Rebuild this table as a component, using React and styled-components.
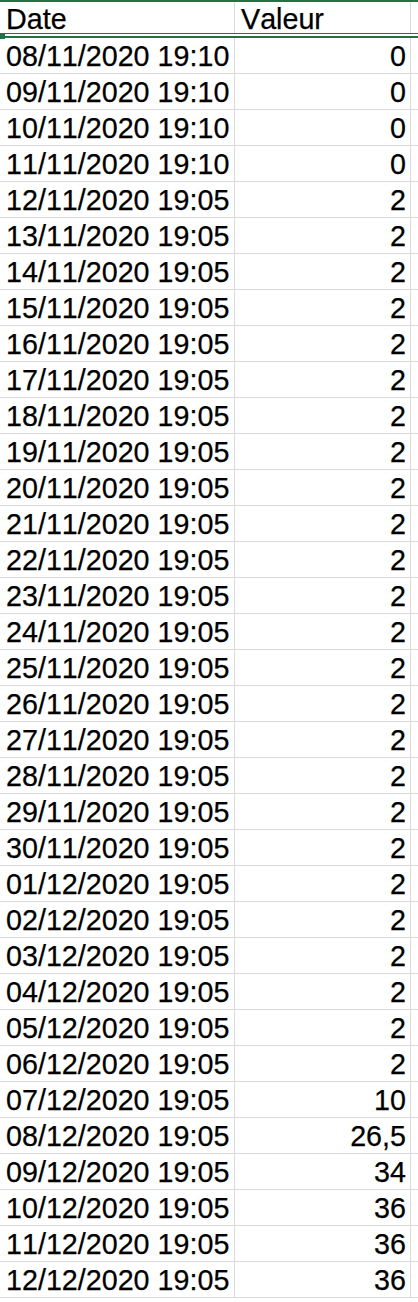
import React from "react";
import styled, { createGlobalStyle } from "styled-components";

const GREEN = "#217346";
const GRID = "#dadada";

const Global = createGlobalStyle`
  html, body { margin: 0; padding: 0; background: #ffffff; }
  body {
    font-family: "Liberation Sans", Arial, sans-serif;
    color: #000;
    font-kerning: none;
    font-feature-settings: "kern" 0;
  }
`;

const Sheet = styled.div`
  position: relative;
  width: 418px;
  border-top: 2px solid ${GREEN};
  overflow: hidden;
`;

const Row = styled.div`
  display: flex;
  height: ${(p) => (p.$header ? "31px" : "35px")};
  border-bottom: ${(p) => (p.$header ? "none" : `1px solid ${GRID}`)};
`;

const Cell = styled.div`
  box-sizing: border-box;
  flex: ${(p) => (p.$w ? `0 0 ${p.$w}px` : "1 1 auto")};
  border-right: ${(p) => (p.$w ? `1px solid ${GRID}` : "none")};
  font-size: 28.7px;
  line-height: ${(p) => (p.$header ? "29px" : "36px")};
  white-space: nowrap;
  -webkit-text-stroke: 0.25px #000;
  text-align: ${(p) => (p.$right ? "right" : "left")};
  padding-top: ${(p) => (p.$header ? "3px" : "0")};
  padding-left: ${(p) => (p.$right ? "0" : "6px")};
  padding-right: ${(p) => (p.$right ? "4px" : "0")};
`;

const HeaderDivider = styled.div`
  height: 5px;
  border-top: 1px solid ${GREEN};
  box-sizing: border-box;
  display: flex;
  flex-direction: column;
  justify-content: flex-end;
`;

const ThickLine = styled.div`
  height: 2px;
  background: ${GREEN};
`;

const Handle = styled.div`
  position: absolute;
  left: 0;
  top: 31px;
  width: 5px;
  height: 6px;
  background: ${GREEN};
`;

const data = [
  ["08/11/2020 19:10", "0"],
  ["09/11/2020 19:10", "0"],
  ["10/11/2020 19:10", "0"],
  ["11/11/2020 19:10", "0"],
];
for (let d = 12; d <= 30; d++) data.push([`${d}/11/2020 19:05`, "2"]);
for (let d = 1; d <= 6; d++) data.push([`0${d}/12/2020 19:05`, "2"]);
data.push(["07/12/2020 19:05", "10"]);
data.push(["08/12/2020 19:05", "26,5"]);
data.push(["09/12/2020 19:05", "34"]);
data.push(["10/12/2020 19:05", "36"]);
data.push(["11/12/2020 19:05", "36"]);
data.push(["12/12/2020 19:05", "36"]);

export default function App() {
  return (
    <>
      <Global />
      <Sheet>
        <Row $header>
          <Cell $w={235} $header>Date</Cell>
          <Cell $w={176} $header>Valeur</Cell>
          <Cell $header />
        </Row>
        <HeaderDivider>
          <ThickLine />
        </HeaderDivider>
        <Handle />
        {data.map(([date, val]) => (
          <Row key={date}>
            <Cell $w={235}>{date}</Cell>
            <Cell $w={176} $right>{val}</Cell>
            <Cell />
          </Row>
        ))}
      </Sheet>
    </>
  );
}
